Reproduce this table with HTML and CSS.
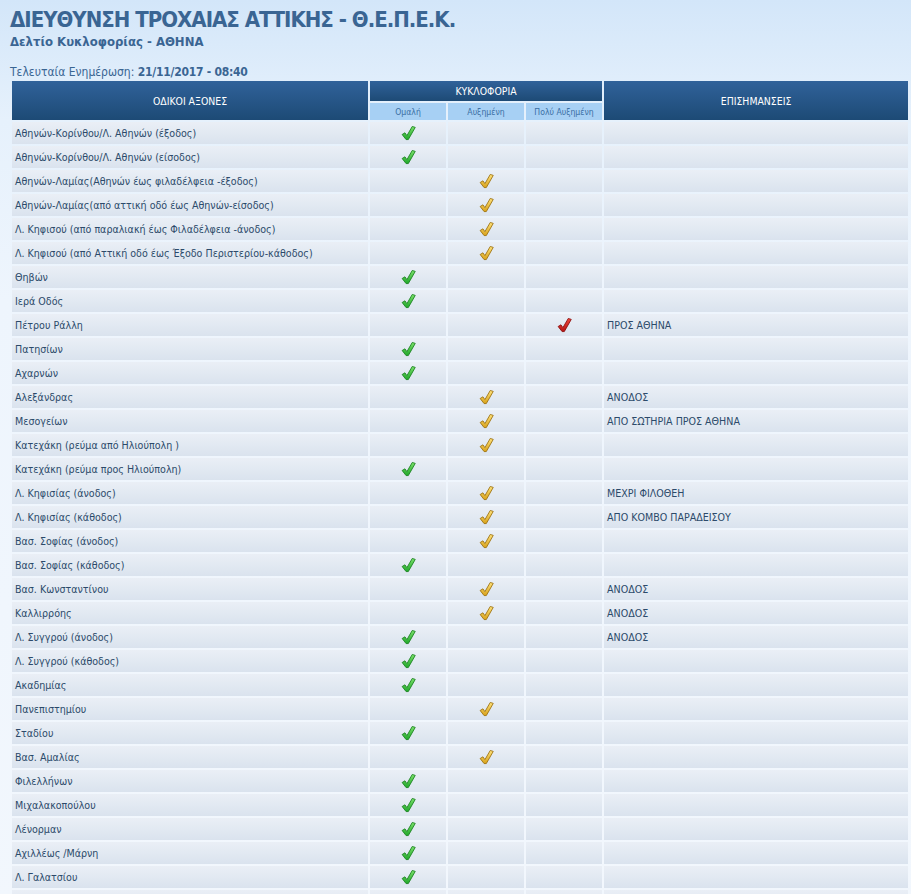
FILE: index.html
```html
<!DOCTYPE html>
<html lang="el">
<head>
<meta charset="utf-8">
<title>Δελτίο Κυκλοφορίας</title>
<link rel="stylesheet" href="styles.css">
</head>
<body>
<svg class="defs" width="0" height="0" aria-hidden="true">
  <defs>
    <linearGradient id="gG" x1="0" y1="0" x2="0" y2="1">
      <stop offset="0" stop-color="#7be06a"/>
      <stop offset="1" stop-color="#1fa82a"/>
    </linearGradient>
    <linearGradient id="gY" x1="0" y1="0" x2="0" y2="1">
      <stop offset="0" stop-color="#ffe27a"/>
      <stop offset="1" stop-color="#d8a21a"/>
    </linearGradient>
    <linearGradient id="gR" x1="0" y1="0" x2="0" y2="1">
      <stop offset="0" stop-color="#f0483a"/>
      <stop offset="1" stop-color="#b41414"/>
    </linearGradient>
    <symbol id="chk" viewBox="0 0 16 16">
      <path d="M1.2 9.6 L4.2 7.8 L6.3 10.8 L12 1 L15.2 2 L7.8 15 L5.4 15 Z"/>
    </symbol>
  </defs>
</svg>

<header class="top">
  <h1 class="title">ΔΙΕΥΘΥΝΣΗ ΤΡΟΧΑΙΑΣ ΑΤΤΙΚΗΣ - Θ.Ε.Π.Ε.Κ.</h1>
  <h2 class="subtitle">Δελτίο Κυκλοφορίας - ΑΘΗΝΑ</h2>
  <p class="updated">Τελευταία Ενημέρωση: <b>21/11/2017 - 08:40</b></p>
</header>

<table class="traffic">
  <colgroup>
    <col class="c-road"><col class="c-lvl"><col class="c-lvl"><col class="c-lvl"><col class="c-note">
  </colgroup>
  <thead>
    <tr class="h1">
      <th rowspan="2" class="hd">ΟΔΙΚΟΙ ΑΞΟΝΕΣ</th>
      <th colspan="3" class="hd hd-traffic">ΚΥΚΛΟΦΟΡΙΑ</th>
      <th rowspan="2" class="hd">ΕΠΙΣΗΜΑΝΣΕΙΣ</th>
    </tr>
    <tr class="h2">
      <th class="sub">Ομαλή</th>
      <th class="sub">Αυξημένη</th>
      <th class="sub">Πολύ Αυξημένη</th>
    </tr>
  </thead>
  <tbody>
    <tr><td>Αθηνών-Κορίνθου/Λ. Αθηνών (έξοδος)</td><td class="ic"><svg class="chk ok"><use href="#chk"/></svg></td><td></td><td></td><td></td></tr>
    <tr><td>Αθηνών-Κορίνθου/Λ. Αθηνών (είσοδος)</td><td class="ic"><svg class="chk ok"><use href="#chk"/></svg></td><td></td><td></td><td></td></tr>
    <tr><td>Αθηνών-Λαμίας(Αθηνών έως φιλαδέλφεια -έξοδος)</td><td></td><td class="ic"><svg class="chk up"><use href="#chk"/></svg></td><td></td><td></td></tr>
    <tr><td>Αθηνών-Λαμίας(από αττική οδό έως Αθηνών-είσοδος)</td><td></td><td class="ic"><svg class="chk up"><use href="#chk"/></svg></td><td></td><td></td></tr>
    <tr><td>Λ. Κηφισού (από παραλιακή έως Φιλαδέλφεια -άνοδος)</td><td></td><td class="ic"><svg class="chk up"><use href="#chk"/></svg></td><td></td><td></td></tr>
    <tr><td>Λ. Κηφισού (από Αττική οδό έως Έξοδο Περιστερίου-κάθοδος)</td><td></td><td class="ic"><svg class="chk up"><use href="#chk"/></svg></td><td></td><td></td></tr>
    <tr><td>Θηβών</td><td class="ic"><svg class="chk ok"><use href="#chk"/></svg></td><td></td><td></td><td></td></tr>
    <tr><td>Ιερά Οδός</td><td class="ic"><svg class="chk ok"><use href="#chk"/></svg></td><td></td><td></td><td></td></tr>
    <tr><td>Πέτρου Ράλλη</td><td></td><td></td><td class="ic"><svg class="chk high"><use href="#chk"/></svg></td><td>ΠΡΟΣ ΑΘΗΝΑ</td></tr>
    <tr><td>Πατησίων</td><td class="ic"><svg class="chk ok"><use href="#chk"/></svg></td><td></td><td></td><td></td></tr>
    <tr><td>Αχαρνών</td><td class="ic"><svg class="chk ok"><use href="#chk"/></svg></td><td></td><td></td><td></td></tr>
    <tr><td>Αλεξάνδρας</td><td></td><td class="ic"><svg class="chk up"><use href="#chk"/></svg></td><td></td><td>ΑΝΟΔΟΣ</td></tr>
    <tr><td>Μεσογείων</td><td></td><td class="ic"><svg class="chk up"><use href="#chk"/></svg></td><td></td><td>ΑΠΟ ΣΩΤΗΡΙΑ ΠΡΟΣ ΑΘΗΝΑ</td></tr>
    <tr><td>Κατεχάκη (ρεύμα από Ηλιούπολη )</td><td></td><td class="ic"><svg class="chk up"><use href="#chk"/></svg></td><td></td><td></td></tr>
    <tr><td>Κατεχάκη (ρεύμα προς Ηλιούπολη)</td><td class="ic"><svg class="chk ok"><use href="#chk"/></svg></td><td></td><td></td><td></td></tr>
    <tr><td>Λ. Κηφισίας (άνοδος)</td><td></td><td class="ic"><svg class="chk up"><use href="#chk"/></svg></td><td></td><td>ΜΕΧΡΙ ΦΙΛΟΘΕΗ</td></tr>
    <tr><td>Λ. Κηφισίας (κάθοδος)</td><td></td><td class="ic"><svg class="chk up"><use href="#chk"/></svg></td><td></td><td>ΑΠΟ ΚΟΜΒΟ ΠΑΡΑΔΕΙΣΟΥ</td></tr>
    <tr><td>Βασ. Σοφίας (άνοδος)</td><td></td><td class="ic"><svg class="chk up"><use href="#chk"/></svg></td><td></td><td></td></tr>
    <tr><td>Βασ. Σοφίας (κάθοδος)</td><td class="ic"><svg class="chk ok"><use href="#chk"/></svg></td><td></td><td></td><td></td></tr>
    <tr><td>Βασ. Κωνσταντίνου</td><td></td><td class="ic"><svg class="chk up"><use href="#chk"/></svg></td><td></td><td>ΑΝΟΔΟΣ</td></tr>
    <tr><td>Καλλιρρόης</td><td></td><td class="ic"><svg class="chk up"><use href="#chk"/></svg></td><td></td><td>ΑΝΟΔΟΣ</td></tr>
    <tr><td>Λ. Συγγρού (άνοδος)</td><td class="ic"><svg class="chk ok"><use href="#chk"/></svg></td><td></td><td></td><td>ΑΝΟΔΟΣ</td></tr>
    <tr><td>Λ. Συγγρού (κάθοδος)</td><td class="ic"><svg class="chk ok"><use href="#chk"/></svg></td><td></td><td></td><td></td></tr>
    <tr><td>Ακαδημίας</td><td class="ic"><svg class="chk ok"><use href="#chk"/></svg></td><td></td><td></td><td></td></tr>
    <tr><td>Πανεπιστημίου</td><td></td><td class="ic"><svg class="chk up"><use href="#chk"/></svg></td><td></td><td></td></tr>
    <tr><td>Σταδίου</td><td class="ic"><svg class="chk ok"><use href="#chk"/></svg></td><td></td><td></td><td></td></tr>
    <tr><td>Βασ. Αμαλίας</td><td></td><td class="ic"><svg class="chk up"><use href="#chk"/></svg></td><td></td><td></td></tr>
    <tr><td>Φιλελλήνων</td><td class="ic"><svg class="chk ok"><use href="#chk"/></svg></td><td></td><td></td><td></td></tr>
    <tr><td>Μιχαλακοπούλου</td><td class="ic"><svg class="chk ok"><use href="#chk"/></svg></td><td></td><td></td><td></td></tr>
    <tr><td>Λένορμαν</td><td class="ic"><svg class="chk ok"><use href="#chk"/></svg></td><td></td><td></td><td></td></tr>
    <tr><td>Αχιλλέως /Μάρνη</td><td class="ic"><svg class="chk ok"><use href="#chk"/></svg></td><td></td><td></td><td></td></tr>
    <tr><td>Λ. Γαλατσίου</td><td class="ic"><svg class="chk ok"><use href="#chk"/></svg></td><td></td><td></td><td></td></tr>
    <tr><td></td><td class="ic"><svg class="chk ok"><use href="#chk"/></svg></td><td></td><td></td><td></td></tr>
  </tbody>
</table>
</body>
</html>
```

FILE: styles.css
```css
html, body {
  margin: 0;
  padding: 0;
}
body {
  background: linear-gradient(to bottom, #d3e6f9 0px, #e6f1fc 120px, #eef5fd 300px, #f2f7fd 100%);
  padding: 0 1px 0 10px;
  font-family: "DejaVu Sans Condensed", "DejaVu Sans", sans-serif;
  color: #2c4a6a;
  min-height: 894px;
}
.defs {
  position: absolute;
  width: 0;
  height: 0;
  overflow: hidden;
}
.top {
  padding-top: 6px;
}
.title {
  margin: 0;
  font-size: 22px;
  line-height: 28px;
  font-weight: bold;
  color: #3a6593;
  letter-spacing: -1px;
}
.subtitle {
  margin: 0;
  font-size: 13px;
  line-height: 16px;
  font-weight: bold;
  color: #3a6593;
}
.updated {
  margin: 15px 0 0 0;
  font-size: 12px;
  line-height: 14px;
  color: #3a6593;
}
.updated b {
  font-weight: bold;
  letter-spacing: -0.25px;
}
.traffic {
  border-collapse: separate;
  border-spacing: 2px;
  table-layout: fixed;
  width: 900px;
  margin-top: 0;
  font-size: 10.6px;
}
.c-road { width: 356px; }
.c-lvl { width: 76px; }
.c-note { width: 304px; }
.hd {
  background: linear-gradient(to bottom, #30629a, #1d4a75);
  color: #ffffff;
  font-weight: normal;
  font-size: 10.4px;
  text-align: center;
  padding: 0;
}
.h1 { height: 20px; }
.h2 { height: 17px; }
.sub {
  background: #a7d0f4;
  color: #3a6ea3;
  font-weight: normal;
  font-size: 8.6px;
  text-align: center;
  padding: 0;
}
tbody td {
  height: 22px;
  padding: 0 0 0 3px;
  background: linear-gradient(to bottom, #eaeff6, #dae3ee);
  white-space: nowrap;
  overflow: hidden;
  vertical-align: middle;
  font-size: 10.6px;
}
tbody td.ic {
  padding: 0;
  text-align: center;
}
.chk {
  display: block;
  width: 15px;
  height: 16px;
  margin: 0 auto;
  stroke-width: 0.9;
  stroke-linejoin: round;
}
.ok { fill: url(#gG); stroke: #16801c; }
.up { fill: url(#gY); stroke: #9a6e0c; }
.high { fill: url(#gR); stroke: #8a0c0c; }
```
